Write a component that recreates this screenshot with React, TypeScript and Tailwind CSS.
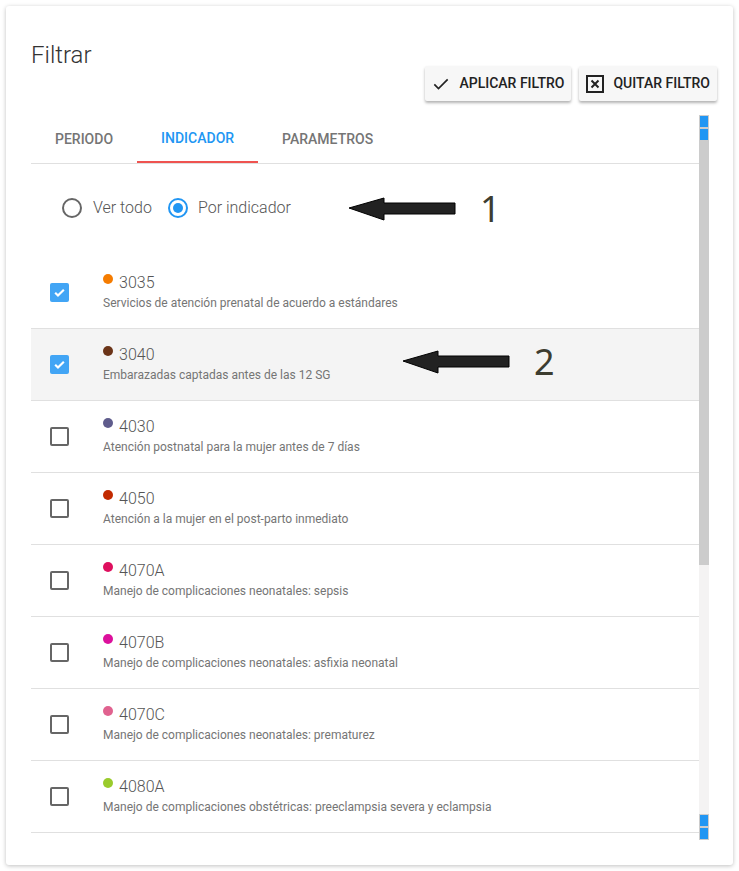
import React from 'react'

const items = [
    { code: '3035', desc: 'Servicios de atención prenatal de acuerdo a estándares', color: '#f57c00', checked: true },
    { code: '3040', desc: 'Embarazadas captadas antes de las 12 SG', color: '#6b3418', checked: true, hover: true },
    { code: '4030', desc: 'Atención postnatal para la mujer antes de 7 días', color: '#5f5c8c', checked: false },
    { code: '4050', desc: 'Atención a la mujer en el post-parto inmediato', color: '#c22a00', checked: false },
    { code: '4070A', desc: 'Manejo de complicaciones neonatales: sepsis', color: '#de0f5e', checked: false },
    { code: '4070B', desc: 'Manejo de complicaciones neonatales: asfixia neonatal', color: '#dc109c', checked: false },
    { code: '4070C', desc: 'Manejo de complicaciones neonatales: prematurez', color: '#e0628f', checked: false },
    { code: '4080A', desc: 'Manejo de complicaciones obstétricas: preeclampsia severa y eclampsia', color: '#9acb2c', checked: false },
]

const Arrow = () => (
    <svg width="108" height="25" viewBox="0 0 108 25">
        <polygon points="1,11 36,1 36,6 107,6 107,17 36,17 36,23" fill="#222" stroke="#000" strokeWidth="1" />
    </svg>
)

const App = () => {
    return (
        <div className="w-[739px] h-[871px] bg-white p-[6px] font-['Roboto',sans-serif]">
            <div className="relative h-[859px] rounded-[3px] bg-white shadow-[0_1px_4px_rgba(0,0,0,0.25)] pl-[25px] pr-[24px] pt-[33px]">
                {/* header */}
                <div className="flex items-start justify-between">
                    <h1 className="text-[24px] leading-[32px] font-light text-[#333]">Filtrar</h1>
                    <div className="flex gap-2 mt-[27px] mr-[-8px]">
                        <button className="flex items-center gap-2 h-[35px] pl-[6px] pr-[7px] bg-[#f7f7f7] rounded-[2px] shadow-[0_2px_3px_rgba(0,0,0,0.3)] text-[14px] font-medium text-[#222]">
                            <svg width="20" height="20" viewBox="0 0 24 24"><path d="M4 12.5l5 5L20 6.5" fill="none" stroke="#222" strokeWidth="2" /></svg>
                            APLICAR FILTRO
                        </button>
                        <button className="flex items-center gap-2 h-[35px] pl-[6px] pr-[7px] bg-[#f7f7f7] rounded-[2px] shadow-[0_2px_3px_rgba(0,0,0,0.3)] text-[14px] font-medium text-[#222]">
                            <svg width="20" height="20" viewBox="0 0 20 20">
                                <rect x="2" y="2" width="16" height="16" fill="none" stroke="#222" strokeWidth="2" />
                                <path d="M6.5 6.5l7 7M13.5 6.5l-7 7" stroke="#222" strokeWidth="2" />
                            </svg>
                            QUITAR FILTRO
                        </button>
                    </div>
                </div>

                {/* scroll area */}
                <div className="flex mt-[14px] h-[725px]">
                    <div className="relative flex-1 overflow-hidden">
                        <div className="flex h-[49px] border-b border-[#e0e0e0] text-[14px] font-medium">
                            <div className="flex items-center pt-[1px] px-6 text-[#757575]">PERIODO</div>
                            <div className="flex items-center pt-[1px] px-6 text-[#2196f3] border-b-2 border-[#ef5350]">INDICADOR</div>
                            <div className="flex items-center pt-[1px] px-6 text-[#757575]">PARAMETROS</div>
                        </div>

                        <div className="flex items-center h-[24px] mt-[32px] mb-[37px] pl-[31px] text-[16px] font-light text-[#555]">
                            <span className="w-[20px] h-[20px] rounded-full border-2 border-[#666]" />
                            <span className="ml-[11px]">Ver todo</span>
                            <span className="ml-[16px] w-[20px] h-[20px] rounded-full border-2 border-[#2196f3] flex items-center justify-center">
                                <span className="w-[10px] h-[10px] rounded-full bg-[#2196f3]" />
                            </span>
                            <span className="ml-[10px]">Por indicador</span>
                        </div>

                        <div>
                            {items.map((it) => (
                                <div key={it.code} className={`flex items-center h-[72px] border-b border-[#e0e0e0] ${it.hover ? 'bg-[#f4f4f4]' : ''}`}>
                                    <div className="ml-[19px] w-[19px] h-[19px]">
                                        {it.checked ? (
                                            <div className="w-[19px] h-[19px] rounded-[2px] bg-[#42a5f5] flex items-center justify-center">
                                                <svg width="13" height="13" viewBox="0 0 12 12"><path d="M2 6.2l2.6 2.6L10 3.4" fill="none" stroke="#fff" strokeWidth="2" /></svg>
                                            </div>
                                        ) : (
                                            <div className="w-[19px] h-[19px] rounded-[2px] border-2 border-[#666]" />
                                        )}
                                    </div>
                                    <div className="ml-[34px] mt-[-3px]">
                                        <div className="flex items-start gap-[6px] h-[24px]">
                                            <span className="mt-[3px] w-[10px] h-[10px] rounded-full" style={{ backgroundColor: it.color }} />
                                            <span className="text-[16px] leading-[24px] font-light text-[#555]">{it.code}</span>
                                        </div>
                                        <div className="text-[12px] leading-[16px] text-[#757575]">{it.desc}</div>
                                    </div>
                                </div>
                            ))}
                        </div>

                        {/* annotations */}
                        <div className="absolute left-[317px] top-[76px] flex items-center">
                            <Arrow />
                            <span className="ml-[24px] text-[36px] leading-none text-[#3d3d30] font-['Noto_Sans',sans-serif]">1</span>
                        </div>
                        <div className="absolute left-[371px] top-[229px] flex items-center">
                            <Arrow />
                            <span className="ml-[24px] text-[36px] leading-none text-[#3d3d30] font-['Noto_Sans',sans-serif]">2</span>
                        </div>
                    </div>

                    {/* scrollbar */}
                    <div className="w-[10px] flex flex-col">
                        <div className="h-[13px] bg-[#ccc] p-px"><div className="h-full bg-[#2196f3]" /></div>
                        <div className="h-[13px] bg-[#ccc] p-px"><div className="h-full bg-[#2196f3]" /></div>
                        <div className="h-[424px] bg-[#cccccc]" />
                        <div className="flex-1 bg-[#f4f3f3]" />
                        <div className="h-[13px] bg-[#ccc] p-px"><div className="h-full bg-[#2196f3]" /></div>
                        <div className="h-[13px] bg-[#ccc] p-px"><div className="h-full bg-[#2196f3]" /></div>
                    </div>
                </div>
            </div>
        </div>
    )
}

export default App
